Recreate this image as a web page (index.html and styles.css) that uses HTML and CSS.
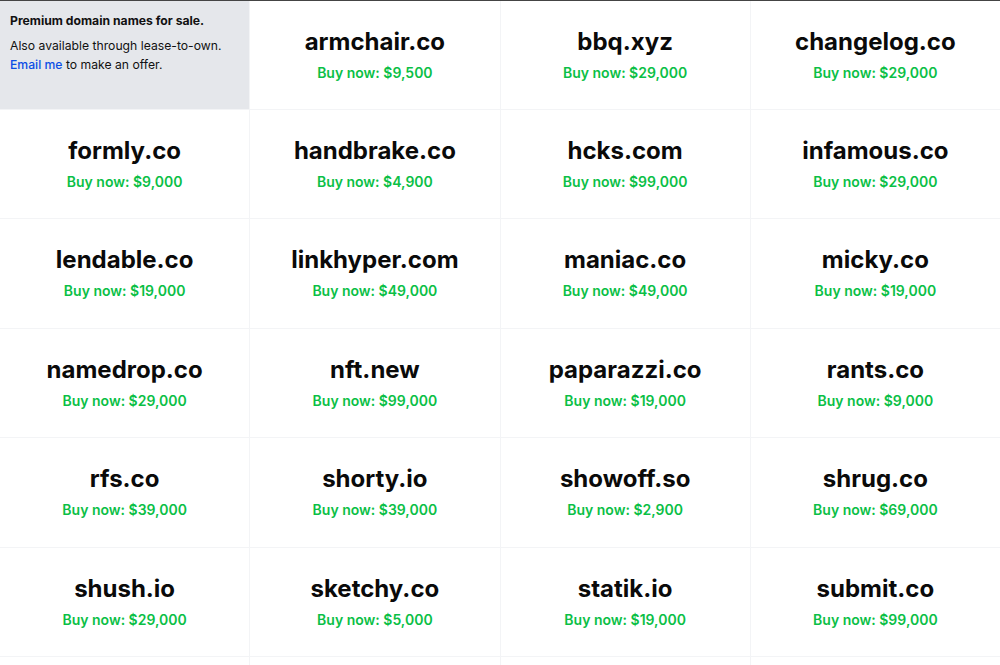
FILE: index.html
```html
<!DOCTYPE html>
<html lang="en">

<head>
  <meta charset="UTF-8">
  <title>Premium domain names for sale</title>
  <link rel="stylesheet" href="styles.css">
</head>

<body>
  <div class="grid">
    <div class="cell intro">
      <p class="intro-title">Premium domain names for sale.</p>
      <p>Also available through lease-to-own.<br><a href="#">Email me</a> to make an offer.</p>
    </div>
    <div class="cell"><h2>armchair.co</h2><span class="price">Buy now: $9,500</span></div>
    <div class="cell"><h2>bbq.xyz</h2><span class="price">Buy now: $29,000</span></div>
    <div class="cell"><h2>changelog.co</h2><span class="price">Buy now: $29,000</span></div>

    <div class="cell"><h2>formly.co</h2><span class="price">Buy now: $9,000</span></div>
    <div class="cell"><h2>handbrake.co</h2><span class="price">Buy now: $4,900</span></div>
    <div class="cell"><h2>hcks.com</h2><span class="price">Buy now: $99,000</span></div>
    <div class="cell"><h2>infamous.co</h2><span class="price">Buy now: $29,000</span></div>

    <div class="cell"><h2>lendable.co</h2><span class="price">Buy now: $19,000</span></div>
    <div class="cell"><h2>linkhyper.com</h2><span class="price">Buy now: $49,000</span></div>
    <div class="cell"><h2>maniac.co</h2><span class="price">Buy now: $49,000</span></div>
    <div class="cell"><h2>micky.co</h2><span class="price">Buy now: $19,000</span></div>

    <div class="cell"><h2>namedrop.co</h2><span class="price">Buy now: $29,000</span></div>
    <div class="cell"><h2>nft.new</h2><span class="price">Buy now: $99,000</span></div>
    <div class="cell"><h2>paparazzi.co</h2><span class="price">Buy now: $19,000</span></div>
    <div class="cell"><h2>rants.co</h2><span class="price">Buy now: $9,000</span></div>

    <div class="cell"><h2>rfs.co</h2><span class="price">Buy now: $39,000</span></div>
    <div class="cell"><h2>shorty.io</h2><span class="price">Buy now: $39,000</span></div>
    <div class="cell"><h2>showoff.so</h2><span class="price">Buy now: $2,900</span></div>
    <div class="cell"><h2>shrug.co</h2><span class="price">Buy now: $69,000</span></div>

    <div class="cell"><h2>shush.io</h2><span class="price">Buy now: $29,000</span></div>
    <div class="cell"><h2>sketchy.co</h2><span class="price">Buy now: $5,000</span></div>
    <div class="cell"><h2>statik.io</h2><span class="price">Buy now: $19,000</span></div>
    <div class="cell"><h2>submit.co</h2><span class="price">Buy now: $99,000</span></div>

    <!-- next row starts below the fold -->
    <div class="cell"></div>
    <div class="cell"></div>
    <div class="cell"></div>
    <div class="cell"></div>
  </div>
</body>

</html>
```

FILE: styles.css
```css
body {
  margin: 0;
  font-family: Inter, "Noto Sans", sans-serif;
  color: #111;
  background: #fff;
  border-top: 1px solid #444;
}

.grid {
  display: grid;
  grid-template-columns: repeat(4, 1fr);
  grid-template-rows: 107.5px;
  grid-auto-rows: 108.5px;
  gap: 1px;
  background: #f3f4f6;
}

.cell {
  background: #fff;
  display: flex;
  flex-direction: column;
  align-items: center;
  justify-content: center;
}

.cell h2 {
  margin: 0 0 6px;
  font-size: 24px;
  font-weight: 700;
  line-height: 30px;
  color: #0a0a0a;
}

.price {
  font-size: 14px;
  font-weight: 600;
  color: #0bbf46;
  line-height: 20px;
}

.intro {
  background: #e5e7eb;
  align-items: flex-start;
  justify-content: flex-start;
  padding: 10px 10px;
  font-size: 12.2px;
  line-height: 19px;
  color: #111;
}

.intro p {
  margin: 0;
}

.intro .intro-title {
  font-weight: 700;
  margin-bottom: 6px;
}

.intro a {
  color: #0b4ee5;
  font-weight: 500;
  text-decoration: none;
}
```
